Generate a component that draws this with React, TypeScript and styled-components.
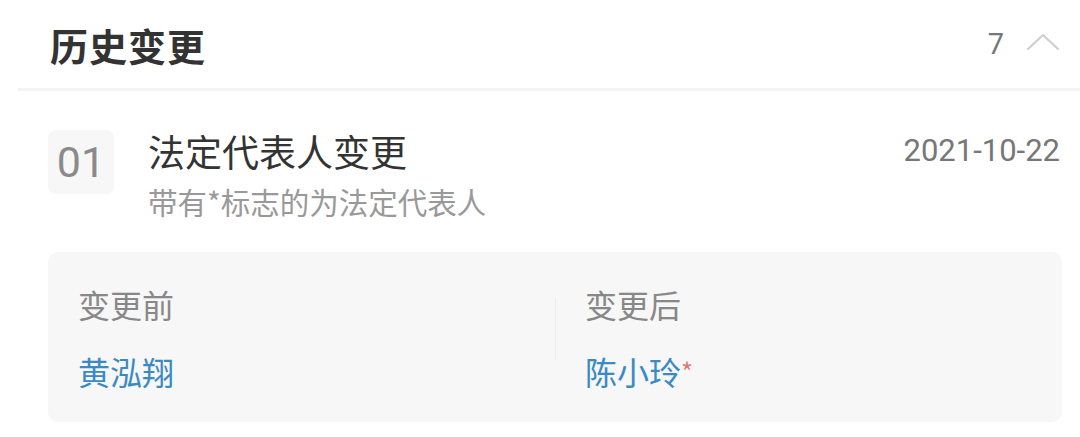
import React from 'react'
import styled, { createGlobalStyle } from 'styled-components'

const GlobalStyle = createGlobalStyle`
  html, body {
    margin: 0;
    padding: 0;
    background: #ffffff;
  }
  body {
    font-family: Roboto, "Noto Sans CJK SC", sans-serif;
  }
`

type Change = {
  label: string
  name: string
  legal?: boolean
}

const changes: Change[] = [
  { label: '变更前', name: '黄泓翔' },
  { label: '变更后', name: '陈小玲', legal: true },
]

const App = () => {
  return (
    <Container>
      <GlobalStyle />
      <Header>
        <Title>历史变更</Title>
        <HeaderRight>
          <Count>7</Count>
          <Chevron width="34" height="20" viewBox="0 0 34 20">
            <path d="M2 17 L17 3 L32 17" fill="none" stroke="#cfcfcf" strokeWidth="2.2" strokeLinecap="round" strokeLinejoin="round" />
          </Chevron>
        </HeaderRight>
      </Header>
      <Item>
        <Row>
          <Index>01</Index>
          <Info>
            <ItemTitle>法定代表人变更</ItemTitle>
            <Hint>带有*标志的为法定代表人</Hint>
          </Info>
          <Date>2021-10-22</Date>
        </Row>
        <Panel>
          {changes.map((c, i) => (
            <Column key={c.label} divided={i > 0}>
              <Label>{c.label}</Label>
              <Name>
                {c.name}
                {c.legal && <Star>*</Star>}
              </Name>
            </Column>
          ))}
        </Panel>
      </Item>
    </Container>
  )
}

export default App

const Container = styled.div`
  width: 1080px;
  height: 437px;
  overflow: hidden;
  background: #fff;
`
const Header = styled.div`
  margin-left: 18px;
  height: 88px;
  display: flex;
  align-items: center;
  justify-content: space-between;
  padding: 0 20px 0 32px;
  border-bottom: 3px solid #f4f4f4;
`
const Title = styled.div`
  font-family: "Noto Sans CJK SC", sans-serif;
  font-size: 38px;
  font-weight: 700;
  color: #333;
  letter-spacing: 1px;
`
const HeaderRight = styled.div`
  display: flex;
  align-items: center;
  gap: 22px;
`
const Count = styled.div`
  font-size: 29px;
  color: #777;
`
const Chevron = styled.svg`
  display: block;
  margin-top: -4px;
`
const Item = styled.div`
  padding: 39px 18px 0 48px;
`
const Row = styled.div`
  display: flex;
  align-items: flex-start;
`
const Index = styled.div`
  width: 66px;
  height: 64px;
  border-radius: 8px;
  background: #f7f7f7;
  display: flex;
  align-items: center;
  justify-content: center;
  font-size: 43px;
  color: #8a8a8a;
  flex-shrink: 0;
`
const Info = styled.div`
  flex: 1;
  margin-left: 34px;
  display: flex;
  flex-direction: column;
`
const ItemTitle = styled.div`
  font-family: "Noto Sans CJK SC", sans-serif;
  font-size: 37px;
  line-height: 48px;
  color: #333;
  margin-top: -3px;
`
const Hint = styled.div`
  font-family: "Noto Sans CJK SC", sans-serif;
  font-size: 29.5px;
  line-height: 38px;
  color: #999;
  margin-top: 7px;
`
const Date = styled.div`
  font-size: 31px;
  color: #777;
  margin-top: 2px;
  margin-right: 2px;
`
const Panel = styled.div`
  margin-top: 32px;
  height: 170px;
  border-radius: 10px;
  background: #f7f7f7;
  display: grid;
  grid-template-columns: 1fr 1fr;
  align-items: center;
`
const Column = styled.div<{ divided?: boolean }>`
  position: relative;
  padding-left: 30px;
  display: flex;
  flex-direction: column;
  gap: 27px;

  &::before {
    content: '';
    display: ${p => (p.divided ? 'block' : 'none')};
    position: absolute;
    left: 0;
    top: 14px;
    height: 62px;
    width: 1px;
    background: #ececec;
  }
`
const Label = styled.div`
  font-family: "Noto Sans CJK SC", sans-serif;
  font-size: 32px;
  line-height: 40px;
  color: #888;
`
const Name = styled.div`
  font-family: "Noto Sans CJK SC", sans-serif;
  font-size: 32px;
  line-height: 40px;
  color: #3a8ac4;
`
const Star = styled.span`
  color: #e07b74;
  font-size: 26px;
  vertical-align: top;
`
